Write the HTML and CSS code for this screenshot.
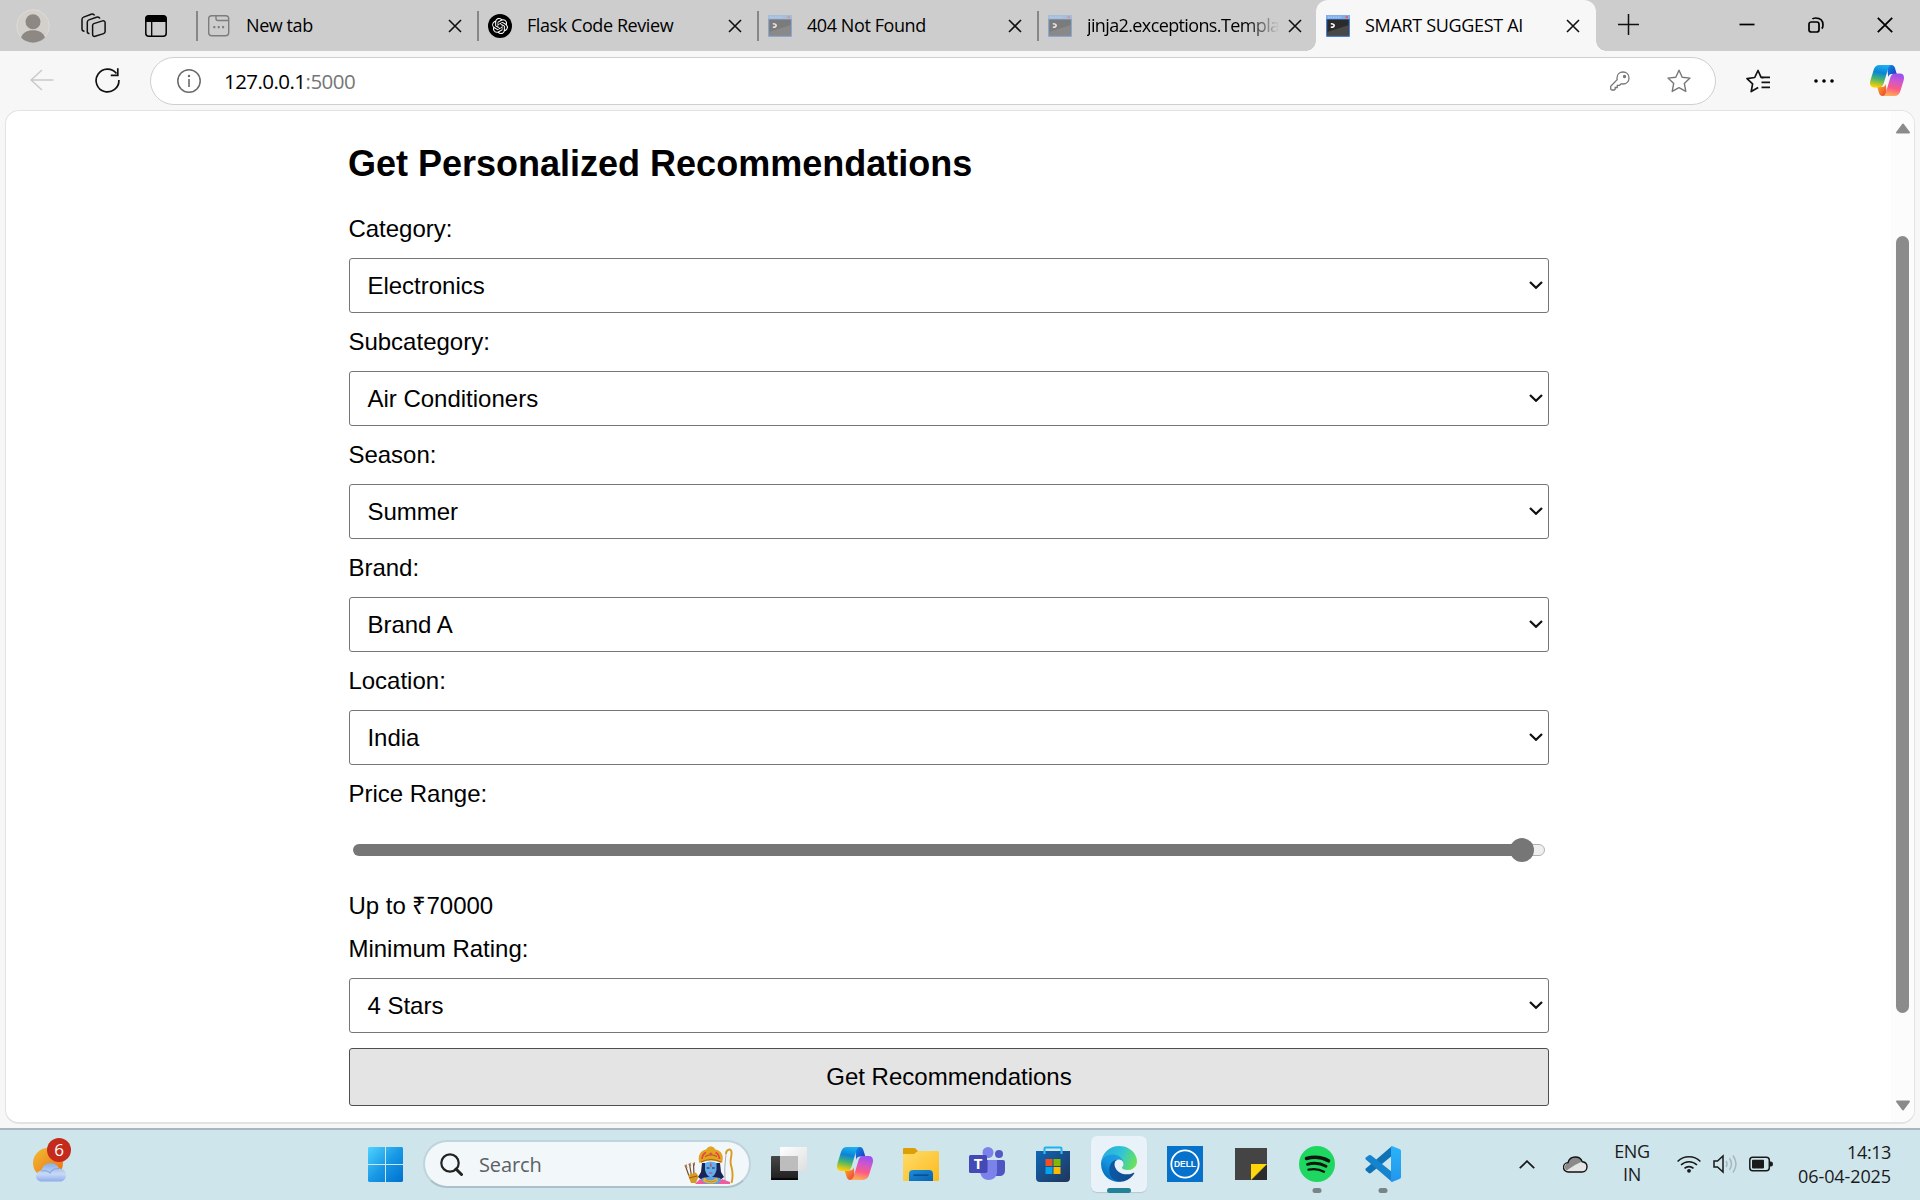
FILE: index.html
```html
<!DOCTYPE html>
<html lang="en">
<head>
<meta charset="utf-8">
<title>SMART SUGGEST AI</title>
<link rel="stylesheet" href="styles.css">
</head>
<body>
<svg class="defs" width="0" height="0" aria-hidden="true">
  <defs>
    <linearGradient id="cpA" x1=".6" y1="0" x2=".4" y2="1"><stop offset="0" stop-color="#1bb1f0"/><stop offset=".35" stop-color="#0a84d8"/><stop offset=".65" stop-color="#4bb56d"/><stop offset="1" stop-color="#ffd000"/></linearGradient>
    <linearGradient id="cpB" x1=".6" y1="0" x2=".4" y2="1"><stop offset="0" stop-color="#9a50f5"/><stop offset=".35" stop-color="#d257c8"/><stop offset=".65" stop-color="#fb5a86"/><stop offset="1" stop-color="#ffae55"/></linearGradient>
    <linearGradient id="cpC" x1="0" y1="0" x2="1" y2="1"><stop offset="0" stop-color="#1090e8"/><stop offset="1" stop-color="#1a2fc0"/></linearGradient>
    <linearGradient id="cpD" x1="0" y1="0" x2="1" y2="1"><stop offset="0" stop-color="#ffb31f"/><stop offset="1" stop-color="#e83a3f"/></linearGradient>
    <linearGradient id="edA" x1="0" y1="0" x2="1" y2="0"><stop offset="0" stop-color="#0c59a4"/><stop offset="1" stop-color="#114a8b"/></linearGradient>
    <linearGradient id="edB" x1=".8" y1=".2" x2=".3" y2="1"><stop offset="0" stop-color="#1b9de2"/><stop offset=".4" stop-color="#1595df"/><stop offset="1" stop-color="#0067b8"/></linearGradient>
    <linearGradient id="edC" x1="0" y1=".3" x2="1" y2=".6"><stop offset="0" stop-color="#2aa9dc"/><stop offset=".5" stop-color="#30c3d8"/><stop offset="1" stop-color="#6ae35a"/></linearGradient>
    <linearGradient id="win" gradientUnits="userSpaceOnUse" x1="0" y1="0" x2="35" y2="35"><stop offset="0" stop-color="#50d2ff"/><stop offset=".5" stop-color="#1899e6"/><stop offset="1" stop-color="#0070cf"/></linearGradient>
    <linearGradient id="sun" x1="0" y1="0" x2="1" y2="1"><stop offset="0" stop-color="#efbd35"/><stop offset="1" stop-color="#f06a10"/></linearGradient>
    <linearGradient id="cloud" x1="0" y1="0" x2="0" y2="1"><stop offset="0" stop-color="#86aee6"/><stop offset=".6" stop-color="#c8d9f4"/><stop offset="1" stop-color="#8dacec"/></linearGradient>
    <linearGradient id="fold" x1="0" y1="0" x2="1" y2="1"><stop offset="0" stop-color="#ffdc6b"/><stop offset="1" stop-color="#fbba1c"/></linearGradient>
    <linearGradient id="foldB" x1="0" y1="0" x2="1" y2="1"><stop offset="0" stop-color="#1a8fdb"/><stop offset="1" stop-color="#0a62b0"/></linearGradient>
    <linearGradient id="store" x1="0" y1="0" x2="1" y2="1"><stop offset="0" stop-color="#0f67b8"/><stop offset="1" stop-color="#203558"/></linearGradient>
    <linearGradient id="viewA" x1="0" y1="0" x2="0" y2="1"><stop offset="0" stop-color="#474747"/><stop offset="1" stop-color="#1e1e1e"/></linearGradient>
    <linearGradient id="viewB" x1="0" y1="0" x2="1" y2="1"><stop offset="0" stop-color="#fff"/><stop offset="1" stop-color="#dedede"/></linearGradient>
    <linearGradient id="vsR" x1="0" y1="0" x2="0" y2="1"><stop offset="0" stop-color="#2bb3f7"/><stop offset="1" stop-color="#2196ee"/></linearGradient>
    <symbol id="x" viewBox="0 0 14 14"><path d="M1 1l12 12M13 1L1 13" stroke="#111" stroke-width="1.6" fill="none"/></symbol>
    <symbol id="term" viewBox="0 0 24 22"><rect width="24" height="22" rx="1" fill="#4b82cd"/><rect y="0" width="24" height="4" rx="1" fill="#7fb0ec"/><path d="M2 2.200h13" stroke="#b9d6f7" stroke-width="1" stroke-dasharray="1.500 1"/><rect x="19.500" y="1.200" width="2.500" height="2" fill="#e06058"/><rect x="1.200" y="4.500" width="21.600" height="16" fill="#2b2b2b"/><path d="M1.200 17L22.800 10V20.500H1.200z" fill="#484848"/><path d="M4.800 8.700q3.400 0 3.400 1.800t-3.400 1.800" stroke="#fff" stroke-width="1.500" fill="none"/></symbol>
    <symbol id="copilot" viewBox="0 0 34 31">
      <path d="M17 0h4.500c2 0 3 1.300 3.600 3.500L26.800 9h-5c-2 0-3 1-3.600 3z" fill="url(#cpC)"/>
      <path d="M17 31h-4.500c-2 0-3-1.300-3.600-3.500L7.200 22h5c2 0 3-1 3.600-3z" fill="url(#cpD)"/>
      <path d="M9.800 0H22c-2.400 0-3.300 1.600-4.100 4.300l-4 13.500c-.9 3-2 4.700-5.400 4.700H4c-3.600 0-4.700-3-3.600-6.900L3.700 4.800C4.700 1.700 6.300 0 9.800 0z" fill="url(#cpA)"/>
      <path d="M24.200 31H12c2.400 0 3.300-1.600 4.100-4.300l4-13.500c.9-3 2-4.700 5.400-4.700H30c3.600 0 4.700 3 3.600 6.900l-3.300 10.800c-1 3.100-2.600 4.800-6.100 4.800z" fill="url(#cpB)"/>
    </symbol>
  </defs>
</svg>

<header class="tabbar">
  <div class="tab-tools">
    <svg class="profile" viewBox="0 0 34 34"><circle cx="17" cy="17" r="16.300" fill="#d3d0cc" stroke="#dedbd7" stroke-width="1"/><circle cx="17" cy="12.800" r="7.500" fill="#8d8884"/><path d="M5 28.500c2-5 6-7.300 12-7.300s10 2.300 12 7.300a16.500 16.500 0 0 1-24 0z" fill="#8d8884"/></svg>
    <svg class="workspaces" viewBox="0 0 25 25" fill="none" stroke="#111" stroke-width="1.500"><path d="M12.800 10.600l8.700-2.700c1.300-.4 2.600.3 2.600 1.700v9c0 1-.5 1.700-1.500 2l-8.500 2.700c-1.300.4-2.500-.4-2.500-1.700v-9c0-1 .3-1.700 1.200-2z"/><path d="M8.500 20.500H8c-1.200 0-1.700-.9-1.700-1.900V9.200c0-1.200.5-1.900 1.600-2.300l7.600-2.700c1.500-.5 3 0 3.300 1.500M3.500 18.200C1.700 18.200 1 17.200 1 16V6.400c0-1.200.5-1.900 1.600-2.300l7.600-2.800c1.500-.5 2.900 0 3.300 1.200"/></svg>
    <svg class="vertical" viewBox="0 0 22 22"><rect x=".8" y=".8" width="20.400" height="20.400" rx="3" fill="none" stroke="#000" stroke-width="1.500"/><path d="M.5 7V3.500A3 3 0 0 1 3.500.5h15a3 3 0 0 1 3 3V7z"/><path d="M6.700 6v15.500" stroke="#000" stroke-width="1.300"/></svg>
  </div>
  <nav class="tabs">
    <div class="tab first"><svg class="fav" viewBox="0 0 24 24" fill="none" stroke="#7d7d7d" stroke-width="1.400"><rect x="1.700" y="1.700" width="20" height="20" rx="3"/><path d="M9 2v2.500a2 2 0 0 0 2 2h10.500"/><path d="M6.300 13.200h2M10.700 13.200h2M15.100 13.200h2" stroke-width="2.200"/></svg><span class="title t1">New tab</span><svg class="x"><use href="#x"/></svg></div>
    <div class="tab"><svg class="fav" viewBox="0 0 24 24"><circle cx="12" cy="12" r="12"/><path transform="translate(4 4) scale(.667)" fill="#fff" d="M22.282 9.821a5.985 5.985 0 0 0-.516-4.910 6.046 6.046 0 0 0-6.510-2.900A6.065 6.065 0 0 0 4.981 4.182a5.985 5.985 0 0 0-3.998 2.900 6.046 6.046 0 0 0 .743 7.097 5.980 5.980 0 0 0 .511 4.911 6.051 6.051 0 0 0 6.515 2.900A5.985 5.985 0 0 0 13.260 24a6.056 6.056 0 0 0 5.772-4.206 5.989 5.989 0 0 0 3.998-2.900 6.056 6.056 0 0 0-.748-7.073zm-9.022 12.608a4.476 4.476 0 0 1-2.876-1.041l.142-.080 4.778-2.758a.795.795 0 0 0 .393-.681v-6.737l2.020 1.169a.071.071 0 0 1 .038.052v5.583a4.504 4.504 0 0 1-4.495 4.494zm-9.661-4.125a4.471 4.471 0 0 1-.535-3.014l.142.085 4.783 2.758a.771.771 0 0 0 .781 0l5.843-3.369v2.332a.080.080 0 0 1-.033.062L9.740 19.950a4.499 4.499 0 0 1-6.141-1.646zM2.341 7.896a4.485 4.485 0 0 1 2.366-1.973V11.600a.766.766 0 0 0 .388.677l5.814 3.354-2.020 1.169a.076.076 0 0 1-.071 0l-4.830-2.787A4.504 4.504 0 0 1 2.341 7.872zm16.596 3.856L13.104 8.364 15.119 7.200a.076.076 0 0 1 .071 0l4.830 2.791a4.494 4.494 0 0 1-.676 8.104v-5.677a.790.790 0 0 0-.407-.667zm2.011-3.023l-.142-.085-4.774-2.782a.776.776 0 0 0-.785 0L9.409 9.230V6.897a.066.066 0 0 1 .028-.061l4.830-2.787a4.499 4.499 0 0 1 6.680 4.660zM8.307 12.863l-2.020-1.164a.080.080 0 0 1-.038-.057V6.074a4.499 4.499 0 0 1 7.376-3.454l-.142.081L8.704 5.459a.795.795 0 0 0-.393.681zm1.098-2.365l2.602-1.500 2.607 1.500v2.999l-2.597 1.500-2.607-1.500z"/></svg><span class="title t2">Flask Code Review</span><svg class="x"><use href="#x"/></svg></div>
    <div class="tab"><svg class="fav dim"><use href="#term"/></svg><span class="title t3">404 Not Found</span><svg class="x"><use href="#x"/></svg></div>
    <div class="tab"><svg class="fav dim"><use href="#term"/></svg><span class="title t4">jinja2.exceptions.Templa</span><svg class="x"><use href="#x"/></svg></div>
    <div class="tab active"><svg class="fav"><use href="#term"/></svg><span class="title t5">SMART SUGGEST AI</span><svg class="x"><use href="#x"/></svg></div>
  </nav>
  <svg class="plus" viewBox="0 0 21 21"><path d="M10.500 0v21M0 10.500h21" stroke="#111" stroke-width="1.500"/></svg>
  <div class="win-buttons">
    <svg viewBox="0 0 16 16"><path d="M.5 7.500h15" stroke="#000" stroke-width="1.700"/></svg>
    <svg viewBox="0 0 16 16" fill="none" stroke="#000" stroke-width="1.700"><rect x="1" y="5" width="10" height="10" rx="2.300"/><path d="M4.500 2.200C5 1.300 6 1 7.500 1 12 1 15 3.500 15 8c0 1.500-.5 3-1.300 3.500"/></svg>
    <svg viewBox="0 0 16 16"><path d="M.8.800l14.400 14.400M15.200.800L.8 15.200" stroke="#000" stroke-width="1.800"/></svg>
  </div>
</header>

<div class="toolbar">
  <svg class="back" viewBox="0 0 24 22" fill="none" stroke="#c9c9c9" stroke-width="1.500"><path d="M23.500 11H1M12 1L1 11l11 10"/></svg>
  <svg class="reload" viewBox="0 0 25 25" fill="none" stroke="#111" stroke-width="1.700"><path d="M21.500 5.500A11.400 11.400 0 1 0 23.900 12"/><path d="M22.800.300v7h-7"/></svg>
  <div class="omnibox">
    <svg class="info" viewBox="0 0 24 24"><circle cx="12" cy="12" r="11.200" fill="none" stroke="#6a6a6a" stroke-width="1.500"/><path d="M12 10v8" stroke="#6a6a6a" stroke-width="1.600"/><circle cx="12" cy="7" r="1.200" fill="#6a6a6a"/></svg>
    <span class="url">127.0.0.1<span class="port">:5000</span></span>
    <svg class="key" viewBox="0 0 20 20" fill="none" stroke="#777" stroke-width="1.300"><path d="M13 1c3.500 0 6 2.500 6 6s-2.500 6-6 6c-.6 0-1.200 0-1.700-.3L9.500 14.300H7.300v2.200H5.200v1.600l-1 .9H2c-.8 0-1.300-.5-1.300-1.300v-2c0-.4.200-.7.500-1l6-6C7 8.200 7 7.600 7 7c0-3.500 2.500-6 6-6z"/><circle cx="14.500" cy="5.500" r="1" fill="#777"/></svg>
    <svg class="star" viewBox="0 0 24 24" fill="none" stroke="#777" stroke-width="1.400" stroke-linejoin="round"><path d="M12 1.200l3.200 7 7.800.900-5.700 5.300 1.500 8L12 18.700l-6.800 3.700 1.500-8L1 9.100l7.800-.9z"/></svg>
  </div>
  <svg class="favs" viewBox="0 0 24 24" fill="none" stroke="#111" stroke-width="1.700" stroke-linejoin="round"><path d="M17.500 8.600l-2.400-.2L12 1.500l-3.300 7L1 9.600l5.600 5.200-1.400 7.800 7-4"/><path d="M15.500 8.300H24M15.500 13.300H24M15.500 18.300H24"/></svg>
  <svg class="dots" viewBox="0 0 20 4"><circle cx="2" cy="2" r="1.800"/><circle cx="10" cy="2" r="1.800"/><circle cx="18" cy="2" r="1.800"/></svg>
  <svg class="cp"><use href="#copilot"/></svg>
</div>

<div class="viewport">
  <main class="page">
    <form class="form">
      <h2>Get Personalized Recommendations</h2>
      <label>Category:</label>
      <div class="select"><select><option>Electronics</option></select><svg viewBox="0 0 14 8"><path d="M1 1l6 5.800L13 1"/></svg></div>
      <label>Subcategory:</label>
      <div class="select"><select><option>Air Conditioners</option></select><svg viewBox="0 0 14 8"><path d="M1 1l6 5.800L13 1"/></svg></div>
      <label>Season:</label>
      <div class="select"><select><option>Summer</option></select><svg viewBox="0 0 14 8"><path d="M1 1l6 5.800L13 1"/></svg></div>
      <label>Brand:</label>
      <div class="select"><select><option>Brand A</option></select><svg viewBox="0 0 14 8"><path d="M1 1l6 5.800L13 1"/></svg></div>
      <label>Location:</label>
      <div class="select"><select><option>India</option></select><svg viewBox="0 0 14 8"><path d="M1 1l6 5.800L13 1"/></svg></div>
      <label>Price Range:</label>
      <div class="slider"><div class="fill"></div><div class="thumb"></div><div class="rest"></div></div>
      <p>Up to ₹70000</p>
      <label>Minimum Rating:</label>
      <div class="select"><select><option>4 Stars</option></select><svg viewBox="0 0 14 8"><path d="M1 1l6 5.800L13 1"/></svg></div>
      <button type="button">Get Recommendations</button>
    </form>
  </main>
  <div class="scrollbar">
    <svg viewBox="0 0 16 11"><path d="M8 1.500l6 8H2z"/></svg>
    <div class="scroll-thumb"></div>
    <svg viewBox="0 0 16 11"><path d="M8 9.500l6-8H2z"/></svg>
  </div>
</div>

<footer class="taskbar">
  <div class="weather">
    <svg viewBox="0 0 34 35"><circle cx="15" cy="16" r="15" fill="url(#sun)"/><path d="M8 34.500a5 5 0 0 1-5-5c0-3.500 2.500-6 5.500-6 1-4.500 4.500-7.500 9-7.500s7.500 2.500 8.500 5.500c4 0 7 2.800 7 6.500 0 4-2.500 6.500-6 6.500z" fill="url(#cloud)"/><path d="M8.500 24c4-1 7 0 8.500 2 1.500-3 5-4.500 9-4.300" fill="none" stroke="#86aae6" stroke-width="1.200"/></svg>
    <span class="badge">6</span>
  </div>
  <svg class="start" viewBox="0 0 35 35" fill="url(#win)"><path d="M1 0h16v17H0V1zM18 0h16l1 1v16H18zM0 18h17v17H1l-1-1zM18 18h17v16l-1 1H18z"/></svg>
  <div class="search">
    <svg class="lens" viewBox="0 0 23 23" fill="none" stroke="#222"><circle cx="10" cy="10" r="8.700" stroke-width="2.200"/><path d="M16 16l5.500 5.500" stroke-width="3" stroke-linecap="round"/></svg>
    <span class="search-text">Search</span>
    <svg class="deity" viewBox="0 0 50 38">
      <path d="M5 30L1.500 20M7.500 30L5.500 18M10 30L9.500 17" stroke="#7a4a2a" stroke-width="1.200"/><path d="M0 20l2.500-2 1 4zM4 18.500l2.500-2 .8 4zM8.500 17.500l2.500-1.500v4z" fill="#a87c58"/>
      <path d="M4 29l8-2.500 2.500 4L12 37H7z" fill="#d79a25"/><path d="M5 32l8-2" stroke="#8f5a16" stroke-width="1"/>
      <path d="M18 17h18l1 9 3 5-4 3H18l-4-3 3-5z" fill="#1b2553"/>
      <path d="M15 38l3-6 6-1h6l6 1 4 6z" fill="#5aa2e8"/><path d="M11 38l5-5 6 5zM34 38l4-5 8 3v2z" fill="#f05c9c"/>
      <path d="M21 17q5.500-3 11.500 0v7q-1.500 6-5.700 7.500-4.300-1.500-5.800-7.500z" fill="#63adf0"/>
      <path d="M15.500 17C13 9 17 4.500 22 3.500Q23.500.5 26.700.3 30 .5 31.500 3.500C37 4.500 40.500 9 38 17q-11-5-22.500 0z" fill="#e3a423"/>
      <path d="M18 13q.5-5 4-6.500M31.500 6.500q3.500 1.500 4 6.500" stroke="#e8404d" stroke-width="1.700" fill="none"/><path d="M17 16q10-5 20 0M21 10.500q6-3.500 12 0" stroke="#a96212" stroke-width="1.200" fill="none"/><circle cx="26.800" cy="8" r="1.500" fill="#e34b4f"/>
      <path d="M26.800 17.500v3.500" stroke="#e23c37" stroke-width="1.200"/><path d="M22.700 22h2.800M28 22h2.800" stroke="#172445" stroke-width="1"/><path d="M25.300 27h3" stroke="#d7445a" stroke-width="1.100"/>
      <path d="M20 31.500q6.500 6 13 0l1 3.500q-7 5-15 0z" fill="#f0b729"/><path d="M21.500 34.500q5.500 3 11 0" stroke="#c8791b" stroke-width=".8" fill="none"/>
      <path d="M42 8c0-5 5.500-6 5.500-2 .5 6-2.500 8 0 15 1.500 6 1.500 11 0 16" stroke="#d99b20" stroke-width="1.900" fill="none"/><path d="M42 8q-2 14-1 27" stroke="#8e8ca0" stroke-width=".7" fill="none"/>
    </svg>
  </div>
  <div class="apps">
    <div class="app"><svg viewBox="0 0 36 36"><rect y="10" width="27" height="24" rx="1" fill="url(#viewA)"/><path d="M0 33h27" stroke="#000" stroke-width="1.500"/><rect x="9" y="1" width="27" height="24" rx="1" fill="url(#viewB)"/><path d="M9 10h18v15H9z" fill="#bdbdbd"/></svg></div>
    <div class="app"><svg viewBox="0 0 36 36"><svg y="1" width="36" height="33"><use href="#copilot"/></svg></svg></div>
    <div class="app"><svg viewBox="0 0 36 36"><path d="M0 3q0-1 1-1h10q2 0 2.500 1.500L15 5v6H0z" fill="#dca006"/><path d="M0 8h11l4-3h20q1 0 1 1v28q0 1-1 1H1q-1 0-1-1z" fill="url(#fold)"/><path d="M6 35v-7q0-4 4-4h16q4 0 4 4v7z" fill="url(#foldB)"/><path d="M10.500 29.200h15" stroke="#0a4f96" stroke-width="1.700"/></svg></div>
    <div class="app"><svg viewBox="0 0 36 36"><circle cx="30" cy="8" r="4" fill="#5159c5"/><path d="M25 14h9q2 0 2 2v8c0 4-2 6-6 6h-4z" fill="#4f56c1"/><circle cx="19" cy="6.500" r="5.500" fill="#7b83eb"/><path d="M12 14h16v12c0 5-4 8-8.500 8S12 31 11 26z" fill="#7b83eb"/><path d="M12 26h7V14h-7z" fill="#5d64cb"/><rect y="9" width="18" height="18" rx="1.500" fill="#4549b5"/><text x="9" y="23" text-anchor="middle" class="teams-t">T</text></svg></div>
    <div class="app"><svg viewBox="0 0 36 36"><path d="M9.500 7V2.500q0-1 1-1h15q1 0 1 1V7" fill="none" stroke="#1fb2f0" stroke-width="2"/><path d="M1 5h34v27q0 4-4 4H5q-4 0-4-4z" fill="url(#store)"/><path d="M9.500 5v3M26.500 5v3" stroke="#35c0f5" stroke-width="2"/><path d="M10.500 13h7v7h-7z" fill="#f25022"/><path d="M18.500 13h7v7h-7z" fill="#7fba00"/><path d="M10.500 21h7v7h-7z" fill="#00a4ef"/><path d="M18.500 21h7v7h-7z" fill="#ffb900"/></svg></div>
    <div class="app current"><svg viewBox="0 0 256 256"><path fill="url(#edB)" d="M105.700 241.400a79.200 79.200 0 0 1-22.700-21.300 80.700 80.700 0 0 1 29.500-120c3.200-1.500 8.500-4.100 15.600-4a32.400 32.400 0 0 1 25.700 13 31.900 31.900 0 0 1 6.300 18.700c0-.2 24.500-79.600-80-79.600-43.900 0-80 41.700-80 78.200a130.200 130.200 0 0 0 12.100 56 128 128 0 0 0 156.400 67 75.500 75.500 0 0 1-62.800-8z"/><path fill="url(#edA)" d="M231 190.500c-3.400 1.800-6.900 3.400-10.500 4.700a101.900 101.900 0 0 1-35.900 6.400c-47.300 0-88.500-32.500-88.500-74.300a31.500 31.500 0 0 1 16.400-27.300c-42.800 1.800-53.800 46.400-53.800 72.500 0 74 68.100 81.400 82.800 81.400 7.900 0 19.800-2.300 27-4.600l1.300-.4a128.300 128.300 0 0 0 66.600-52.800 4 4 0 0 0-5.400-5.600z"/><path fill="url(#edC)" d="M152.300 148.900c-.9 1-3.400 2.500-3.400 5.600 0 2.600 1.700 5.200 4.800 7.300 14.300 10 41.400 8.600 41.500 8.600a59.600 59.600 0 0 0 30.300-8.300 61.400 61.400 0 0 0 30.400-52.900c.3-22.400-8-37.300-11.300-43.900C223.500 23.900 177.700 0 128 0A128 128 0 0 0 0 126.200c.5-36.500 36.800-66 80-66 3.500 0 23.500.3 42 10a72.600 72.600 0 0 1 30.900 29.300c6.100 10.600 7.200 24.100 7.200 29.500s-2.700 13.300-7.800 19.900z"/></svg><i class="bar"></i></div>
    <div class="app"><svg viewBox="0 0 36 36"><path d="M0 0h36v36H0z" fill="#0672cb"/><circle cx="18" cy="18" r="13.700" fill="none" stroke="#fff" stroke-width="1.800"/><text x="18" y="21" text-anchor="middle" textLength="22" lengthAdjust="spacingAndGlyphs" class="dell-t">DELL</text></svg></div>
    <div class="app"><svg viewBox="0 0 36 36"><path d="M2 2h32v16L20 34H2z" fill="#444"/><path d="M34 18v16H19z" fill="#2b2b2b"/><path d="M18 18h16L18 34z" fill="#ffd60a"/></svg></div>
    <div class="app"><svg viewBox="0 0 36 36"><circle cx="18" cy="18" r="18" fill="#1ed760"/><g fill="none" stroke="#10150f" stroke-linecap="round"><path d="M7.500 12.500q12-3.300 22 2.300" stroke-width="3.500"/><path d="M8.500 18.300q10-2.800 18.500 2" stroke-width="2.900"/><path d="M9.500 23.700q8.500-2 15.500 2" stroke-width="2.300"/></g></svg><i class="dot"></i></div>
    <div class="app"><svg viewBox="0 0 36 36"><path d="M27 0L27 9.800 6 27 4.300 27.400.800 24.400Q0 23.500.800 22.500z" fill="#0e72b7"/><path d="M27 36V26L6 9.300 4.300 9 .8 11.600Q0 12.500.8 13.500z" fill="#1583cd"/><path d="M27 0l8 3.300q1 .5 1 1.700v26q0 1.200-1 1.700L27 36q-1 0-1-1V1q0-1 1-1z" fill="url(#vsR)"/></svg><i class="dot"></i></div>
  </div>
  <div class="tray">
    <svg class="chev" viewBox="0 0 16 9"><path d="M.8 8.200L8 1.200l7.200 7" fill="none" stroke="#1a1a1a" stroke-width="1.800"/></svg>
    <svg class="drive" viewBox="0 0 25 17"><path d="M5.500 16A4.700 4.700 0 0 1 5 6.600C6 2.800 9 1 12.300 1c3.500 0 6 2 7 4.800 3 .3 4.700 2.500 4.700 5 0 3-2 5.200-5 5.200z" fill="#e5e5e5"/><path d="M3.500 14.500A4.700 4.700 0 0 1 5 6.600C6 2.800 9 1 12.300 1c3 0 5.400 1.500 6.700 4.500L12 9z" fill="#8a8a8a"/><path d="M5.500 16A4.700 4.700 0 0 1 5 6.600C6 2.800 9 1 12.300 1c3.500 0 6 2 7 4.800 3 .3 4.700 2.500 4.700 5 0 3-2 5.200-5 5.200z" fill="none" stroke="#111" stroke-width="1.400"/></svg>
    <div class="lang"><span>ENG</span><span>IN</span></div>
    <svg class="wifi" viewBox="0 0 24 18" fill="none" stroke="#1a1a1a" stroke-width="1.600"><path d="M.6 6.500a16.200 16.200 0 0 1 22.800 0M4 10a11.400 11.400 0 0 1 16 0M7.500 13.400a6.500 6.500 0 0 1 9 0"/><circle cx="12" cy="15.800" r="1.900" fill="#1a1a1a" stroke="none"/></svg>
    <svg class="vol" viewBox="0 0 24 20" fill="none" stroke-width="1.500"><path d="M1 7v6h3.500L10 18V2L4.500 7z" stroke="#1a1a1a"/><path d="M13 7q2 3 0 6M16.500 4.200q4 5.800 0 11.600M20 1.500q6 8.500 0 17" stroke="#a5b7bd"/></svg>
    <svg class="bat" viewBox="0 0 24 16"><rect x=".8" y="1.300" width="19.500" height="13.500" rx="3" fill="none" stroke="#1a1a1a" stroke-width="1.500"/><rect x="3" y="3.700" width="12" height="8.700" rx=".8" fill="#1a1a1a"/><path d="M21 5.500h1q2 0 2 2.500t-2 2.500h-1z" fill="#1a1a1a"/></svg>
    <div class="clock"><span class="time">14:13</span><span class="date">06-04-2025</span></div>
  </div>
</footer>
</body>
</html>
```
FILE: styles.css
```css
* { box-sizing: border-box; }
html, body { height: 100%; }
body {
  margin: 0;
  width: 1920px;
  height: 1200px;
  overflow: hidden;
  display: flex;
  flex-direction: column;
  background: #f7f7f7;
  color: #000;
  font-family: "Open Sans", "Noto Sans", sans-serif;
}
svg { display: block; flex: none; }
.defs { position: absolute; }

/* Tab strip */
.tabbar { height: 51px; flex: none; display: flex; align-items: center; background: #cdcdcd; }
.tab-tools { width: 196px; display: flex; align-items: center; padding-left: 16px; }
.profile { width: 34px; height: 34px; }
.workspaces { width: 25px; height: 25px; margin-left: 31px; }
.vertical { width: 22px; height: 22px; margin-left: 39px; }
.tabs { width: 1400px; height: 51px; display: flex; }
.tab { flex: 0 0 280px; min-width: 0; display: flex; align-items: center; padding: 0 14px 0 1px; }
.tab::before { content: ""; width: 2px; height: 30px; margin-right: 9px; background: #878787; }
.first { padding-left: 0; }
.active { position: relative; padding: 0 16px 0 0; background: #f7f7f7; border-radius: 12px 12px 0 0; }
.active::before { width: 0; margin-right: 10px; }
.active::after {
  content: "";
  position: absolute;
  inset: auto -10px 0;
  height: 10px;
  background:
    radial-gradient(circle at 0 0, transparent 9.5px, #f7f7f7 10px) left / 10px 10px no-repeat,
    radial-gradient(circle at 100% 0, transparent 9.5px, #f7f7f7 10px) right / 10px 10px no-repeat;
}
.fav { width: 24px; height: 24px; }
.dim { opacity: .5; }
.title { flex: 1; margin: -1px 14px 0 15px; overflow: hidden; white-space: nowrap; font-size: 18px; line-height: 26px; letter-spacing: -.42px; }
.t4 { margin-right: 9px; letter-spacing: -.62px; -webkit-mask-image: linear-gradient(90deg, #000 83%, transparent); mask-image: linear-gradient(90deg, #000 83%, transparent); }
.t5 { letter-spacing: -.32px; }
.x { width: 14px; height: 14px; }
.plus { width: 21px; height: 21px; margin: -2px 0 0 22px; }
.win-buttons { margin-left: auto; padding-right: 27px; display: flex; gap: 53px; }
.win-buttons svg { width: 16px; height: 16px; margin-top: -1px; }

/* Address row */
.toolbar { height: 59px; flex: none; display: flex; align-items: center; padding: 1px 16px 0 30px; }
.back { width: 24px; height: 22px; margin-top: -2px; }
.reload { width: 25px; height: 25px; margin-left: 41px; margin-top: -1px; }
.omnibox { width: 1566px; height: 48px; margin-left: 30px; display: flex; align-items: center; background: #fff; border: 1.5px solid #cfcfcf; border-radius: 24px; padding: 0 24px 0 26px; }
.info { width: 24px; height: 24px; }
.url { flex: 1; margin-left: 23px; font-size: 20.500px; line-height: 28px; letter-spacing: -.55px; }
.port { color: #767676; }
.key { width: 20px; height: 20px; margin-right: 37px; }
.star { width: 24px; height: 24px; }
.favs { width: 24px; height: 24px; margin-left: 30px; }
.dots { width: 20px; height: 4px; margin-left: 44px; }
.cp { width: 34px; height: 31px; margin-left: auto; margin-top: -1px; }

/* Page */
.viewport { height: 1014px; flex: none; margin: 0 5px; display: flex; background: #fff; border: 1px solid #e3e3e3; border-bottom-width: 2px; border-radius: 14px; overflow: hidden; }
.page { flex: 1; font-family: "Liberation Sans", Arial, sans-serif; font-size: 24px; }
.form { width: 1200px; margin-left: 343px; display: flex; flex-direction: column; }
h2 { margin: 32px 0 31px -1px; font-size: 36px; line-height: 41px; }
label, p { margin: 0 0 0 -.6px; line-height: 27px; }
.select { display: grid; align-items: center; margin: 16px 0 15px; }
.select > * { grid-area: 1 / 1; }
.select select {
  appearance: none;
  width: 100%;
  height: 55px;
  margin: 0;
  padding: 0 17.400px;
  font: inherit;
  color: #000;
  background: #fff;
  border: 1px solid #767676;
  border-radius: 3px;
}
.select svg { justify-self: end; width: 14px; height: 8px; margin: -1px 6px 0 0; fill: none; stroke: #111; stroke-width: 2.200; pointer-events: none; }
.slider { height: 24px; display: flex; align-items: center; margin: 31px 4px 30px; }
.fill { width: 1160px; height: 12px; background: #767676; border-radius: 6px 0 0 6px; }
.thumb { width: 24px; height: 24px; margin-left: -3px; border-radius: 50%; background: #767676; z-index: 1; }
.rest { flex: 1; height: 12px; margin-left: -8px; background: #efefef; border: 1px solid #b2b2b2; border-radius: 0 6px 6px 0; }
p + label { margin-top: 16px; }
button { height: 58px; font: inherit; color: #000; background: #e4e4e4; border: 1px solid #4f4f4f; border-radius: 3px; }
.scrollbar { width: 23px; background: #fcfcfc; display: flex; flex-direction: column; align-items: center; padding: 12px 0 11px; }
.scrollbar svg { width: 16px; height: 11px; fill: #8b8b8b; stroke: #8b8b8b; stroke-width: 2; stroke-linejoin: round; }
.scroll-thumb { width: 13px; height: 777px; margin: 102px 0 auto; border-radius: 7px; background: #8b8b8b; }

/* Taskbar */
.taskbar { height: 72px; flex: none; margin-top: 4px; padding-bottom: 2px; display: flex; align-items: center; background: #cfe5ec; border-top: 2px solid #a9b6bc; color: #1a1a1a; }
.weather { position: relative; width: 34px; height: 35px; margin-left: 33px; }
.weather svg { width: 34px; height: 35px; }
.badge { position: absolute; left: 14px; top: -9px; width: 24px; height: 24px; border-radius: 50%; background: #c42b1c; color: #fff; font-size: 17px; line-height: 24px; text-align: center; }
.start { width: 35px; height: 35px; margin-left: 301px; }
.search { width: 328px; height: 48px; margin-left: 20px; display: flex; align-items: center; background: #f2f7fa; border: 2px solid #bfd4dc; border-bottom-color: #abc0c8; border-radius: 24px; padding: 0 15px 0 15px; }
.lens { width: 23px; height: 23px; }
.search-text { flex: 1; margin-left: 16px; font-size: 20px; letter-spacing: -.1px; color: #5c6063; }
.deity { width: 50px; height: 38px; margin-top: 2px; }
.apps { display: flex; margin-left: 5px; }
.app { position: relative; width: 66px; height: 56px; display: grid; place-items: center; }
.app > svg { width: 36px; height: 36px; }
.current::before { content: ""; position: absolute; inset: 0 5px; border-radius: 6px; background: #e8f2f8; box-shadow: 0 1px 1px #b5c8d0; }
.current > svg { position: relative; }
.bar, .dot { position: absolute; bottom: -1px; left: 50%; height: 5px; border-radius: 3px; transform: translateX(-50%); }
.bar { width: 24px; background: #238295; }
.dot { width: 9px; background: #788488; }
.teams-t { font: 700 15px "Open Sans", sans-serif; fill: #fff; }
.dell-t { font: 700 9px "Liberation Sans", sans-serif; fill: #fff; }
.tray { flex: 1; display: flex; align-items: center; justify-content: flex-end; padding-right: 29px; font-size: 18px; line-height: 23px; }
.chev { width: 16px; height: 9px; margin-right: 28px; }
.drive { width: 25px; height: 17px; margin-right: 26px; }
.lang { width: 36px; margin: -2px 27px 0 0; display: flex; flex-direction: column; align-items: center; letter-spacing: -.3px; }
.wifi { width: 24px; height: 18px; margin-right: 12px; }
.vol { width: 24px; height: 20px; margin-right: 12px; }
.bat { width: 24px; height: 16px; }
.clock { width: 118px; margin-top: -1px; display: flex; flex-direction: column; align-items: flex-end; line-height: 24px; white-space: nowrap; }
.time { letter-spacing: -.4px; }
.date { letter-spacing: -.1px; }
```
